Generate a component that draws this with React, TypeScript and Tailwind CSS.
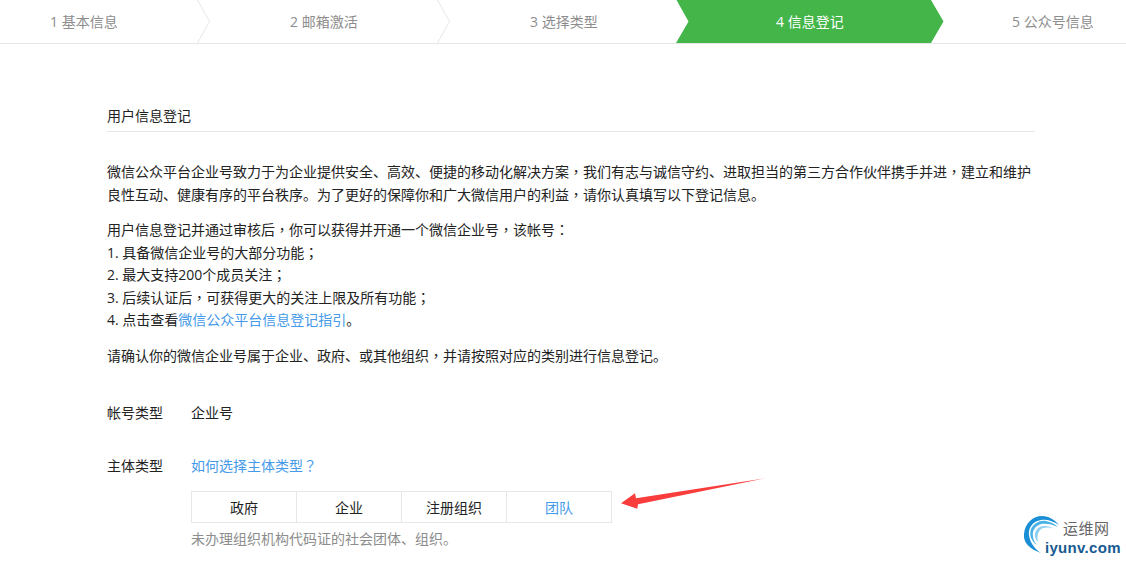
import React from "react";

function T({ children }: { children: string }) {
  const parts = children.split(/([，；：？])/);
  return (
    <>
      {parts.map((p, i) =>
        i % 2 === 1 ? (
          <span key={i} className="leading-[0] font-['Noto_Sans_CJK_TC',sans-serif]">{p}</span>
        ) : (
          <React.Fragment key={i}>{p}</React.Fragment>
        )
      )}
    </>
  );
}

function Chevron({ className }: { className: string }) {
  return (
    <svg className={className} width="14" height="43" viewBox="0 0 14 43">
      <polyline points="0.5,0 12.5,21.5 0.5,43" fill="none" stroke="#e7e7eb" strokeWidth="1" />
    </svg>
  );
}

function Logo() {
  return (
    <div className="absolute left-[1022px] top-[515px] w-[104px] h-[48px] bg-white">
      <svg className="absolute left-0 top-0" width="50" height="48" viewBox="0 0 50 48">
        <path d="M19 38C7 34 1 27 2 19C3 8 11 1 20 1C27 1 33 5 37 10C31 6 25 4 19 5C11 6 6 13 7 20C8 28 13 34 19 38Z" fill="#1a8fd6" />
        <path d="M15 30C9 26 7 20 9 14C12 8 18 5 24 6C29 7 33 9 36 12C30 9 24 8 19 9C13 11 10 16 11 21C11 25 13 28 15 30Z" fill="#4cb2e6" />
        <path d="M16 27C12 23 12 18 15 14C19 10 26 10 33 14C27 12 21 12 18 15C15 19 15 23 16 27Z" fill="#8fd0f0" />
      </svg>
      <div className="absolute left-[41px] top-[3px] text-[15px] leading-[20px] text-[#666666] tracking-[0.5px]">运维网</div>
      <div className="absolute left-[23px] top-[23px] text-[15px] leading-[20px] font-bold text-[#175a92] font-['Liberation_Sans',sans-serif] tracking-[0.3px]">iyunv.com</div>
    </div>
  );
}

export default function App() {
  const steps = [
    { t: "1 基本信息", w: "w-[210px]", p: "pl-[50px]" },
    { t: "2 邮箱激活", w: "w-[239px]", p: "pl-[80px]" },
    { t: "3 选择类型", w: "w-[239px]", p: "pl-[81px]" },
    { t: "4 信息登记", w: "w-[255px]", p: "pl-[88px]" },
    { t: "5 公众号信息", w: "flex-1", p: "pl-[69px]" },
  ];
  return (
    <div className="relative w-[1126px] h-[563px] overflow-hidden bg-white text-[14px] text-[#222222] font-['Open_Sans','Noto_Sans_CJK_SC',sans-serif]">
      <div className="relative flex h-[44px] border-b border-[#e7e7eb] leading-[43px] text-[#8d8d8d]">
        <svg className="absolute left-[676px] top-0" width="268" height="43" viewBox="0 0 268 43">
          <polygon points="0.5,0 255,0 267.5,21.5 255,43 0,43 12.5,21.5" fill="#44b549" />
        </svg>
        <Chevron className="absolute left-[197px] top-0" />
        <Chevron className="absolute left-[437px] top-0" />
        {steps.map((s, i) => (
          <div key={s.t} className={`relative ${s.w} ${s.p} ${i === 3 ? "text-white" : ""}`}>
            {s.t}
          </div>
        ))}
      </div>

      <div className="pl-[107px] pr-[91px] pt-[58px]">
        <div className="h-[30px] leading-[27px] border-b border-[#e7e7eb]">用户信息登记</div>

        <div className="mt-[29px] leading-[22.5px]">
          <p>
            <T>微信公众平台企业号致力于为企业提供安全、高效、便捷的移动化解决方案，我们有志与诚信守约、进取担当的第三方合作伙伴携手并进，建立和维护良性互动、健康有序的平台秩序。为了更好的保障你和广大微信用户的利益，请你认真填写以下登记信息。</T>
          </p>
          <div className="mt-[13px]">
            <p><T>用户信息登记并通过审核后，你可以获得并开通一个微信企业号，该帐号：</T></p>
            <p><T>1. 具备微信企业号的大部分功能；</T></p>
            <p><T>2. 最大支持200个成员关注；</T></p>
            <p><T>3. 后续认证后，可获得更大的关注上限及所有功能；</T></p>
            <p>
              4. 点击查看<span className="text-[#459ae9]">微信公众平台信息登记指引</span>。
            </p>
          </div>
          <p className="mt-[13px]">
            <T>请确认你的微信企业号属于企业、政府、或其他组织，并请按照对应的类别进行信息登记。</T>
          </p>
        </div>

        <div className="mt-[35px] flex leading-[22px]">
          <div className="w-[84px]">帐号类型</div>
          <div>企业号</div>
        </div>

        <div className="mt-[31px] flex leading-[22px]">
          <div className="w-[84px]">主体类型</div>
          <div className="flex-1">
            <div className="text-[#459ae9]"><T>如何选择主体类型？</T></div>
            <div className="mt-[14px] flex w-[421px] h-[32px] border border-[#e7e7eb] leading-[32px] text-center">
              <div className="flex-1 border-r border-[#e7e7eb]">政府</div>
              <div className="flex-1 border-r border-[#e7e7eb]">企业</div>
              <div className="flex-1 border-r border-[#e7e7eb]">注册组织</div>
              <div className="flex-1 text-[#459ae9]">团队</div>
            </div>
            <div className="mt-[5px] text-[#8d8d8d]">未办理组织机构代码证的社会团体、组织。</div>
          </div>
        </div>
      </div>

      <svg className="absolute left-[620px] top-[476px]" width="146" height="34" viewBox="0 0 146 34">
        <polygon points="1,27.3 15,17.3 16,22.3 145,2.3 18,28.3 17.3,32.7" fill="#f93c3c" />
      </svg>

      <Logo />
    </div>
  );
}
